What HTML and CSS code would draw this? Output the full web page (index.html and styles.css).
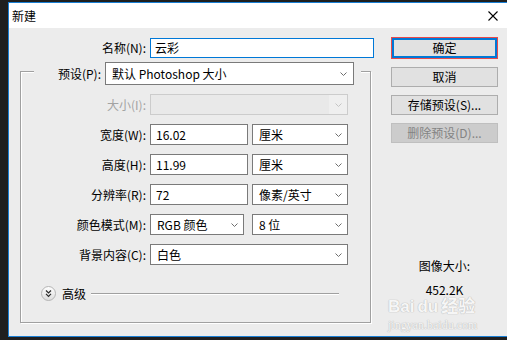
FILE: index.html
```html
<!DOCTYPE html>
<html lang="zh-CN">
<head>
    <meta charset="UTF-8">
    <meta name="viewport" content="width=device-width, initial-scale=1.0">
    <title>新建</title>
    <link rel="stylesheet" href="styles.css">
</head>
<body>
    <div class="window">
        <div class="titlebar">
            <span class="title">新建</span>
            <svg class="close" width="10" height="10" viewBox="0 0 10 10">
                <path d="M0.5 0.5 L9.5 9.5 M9.5 0.5 L0.5 9.5" stroke="#000" stroke-width="1.1" fill="none"/>
            </svg>
        </div>

        <div class="dialog">
            <div class="left">
                <div class="name-row">
                    <span class="label">名称(N):</span>
                    <div class="input focused name-input">云彩</div>
                </div>

                <div class="group">
                    <div class="group-head">
                        <span class="label">预设(P):</span>
                        <div class="select preset">
                            <span>默认 Photoshop 大小</span>
                            <svg class="arrow" width="7" height="4" viewBox="0 0 7 4"><polyline points="0.5,0.5 3.5,3.5 6.5,0.5" fill="none" stroke="#6e6e6e" stroke-width="1"/></svg>
                        </div>
                    </div>

                    <div class="rows">
                        <div class="row">
                            <span class="label disabled-text">大小(I):</span>
                            <div class="select disabled w-full">
                                <span></span>
                                <div class="drop"><svg class="arrow" width="7" height="4" viewBox="0 0 7 4"><polyline points="0.5,0.5 3.5,3.5 6.5,0.5" fill="none" stroke="#c4c4c4" stroke-width="1"/></svg></div>
                            </div>
                        </div>
                        <div class="row">
                            <span class="label">宽度(W):</span>
                            <div class="input w-num">16.02</div>
                            <div class="select w-unit">
                                <span>厘米</span>
                                <svg class="arrow" width="7" height="4" viewBox="0 0 7 4"><polyline points="0.5,0.5 3.5,3.5 6.5,0.5" fill="none" stroke="#6e6e6e" stroke-width="1"/></svg>
                            </div>
                        </div>
                        <div class="row">
                            <span class="label">高度(H):</span>
                            <div class="input w-num">11.99</div>
                            <div class="select w-unit">
                                <span>厘米</span>
                                <svg class="arrow" width="7" height="4" viewBox="0 0 7 4"><polyline points="0.5,0.5 3.5,3.5 6.5,0.5" fill="none" stroke="#6e6e6e" stroke-width="1"/></svg>
                            </div>
                        </div>
                        <div class="row">
                            <span class="label">分辨率(R):</span>
                            <div class="input w-num">72</div>
                            <div class="select w-unit">
                                <span>像素/英寸</span>
                                <svg class="arrow" width="7" height="4" viewBox="0 0 7 4"><polyline points="0.5,0.5 3.5,3.5 6.5,0.5" fill="none" stroke="#6e6e6e" stroke-width="1"/></svg>
                            </div>
                        </div>
                        <div class="row">
                            <span class="label">颜色模式(M):</span>
                            <div class="select w-mode">
                                <span>RGB 颜色</span>
                                <svg class="arrow" width="7" height="4" viewBox="0 0 7 4"><polyline points="0.5,0.5 3.5,3.5 6.5,0.5" fill="none" stroke="#6e6e6e" stroke-width="1"/></svg>
                            </div>
                            <div class="select w-unit bits">
                                <span>8 位</span>
                                <svg class="arrow" width="7" height="4" viewBox="0 0 7 4"><polyline points="0.5,0.5 3.5,3.5 6.5,0.5" fill="none" stroke="#6e6e6e" stroke-width="1"/></svg>
                            </div>
                        </div>
                        <div class="row">
                            <span class="label">背景内容(C):</span>
                            <div class="select w-full">
                                <span>白色</span>
                                <svg class="arrow" width="7" height="4" viewBox="0 0 7 4"><polyline points="0.5,0.5 3.5,3.5 6.5,0.5" fill="none" stroke="#6e6e6e" stroke-width="1"/></svg>
                            </div>
                        </div>
                    </div>

                    <div class="advanced">
                        <svg width="15" height="15" viewBox="0 0 15 15">
                            <defs>
                                <linearGradient id="knob" x1="0" y1="0" x2="0" y2="1">
                                    <stop offset="0" stop-color="#ffffff"/>
                                    <stop offset="1" stop-color="#dcdcdc"/>
                                </linearGradient>
                            </defs>
                            <circle cx="7.5" cy="7.5" r="7" fill="url(#knob)" stroke="#b4b4b4" stroke-width="1"/>
                            <polyline points="5,4.5 7.5,7 10,4.5" fill="none" stroke="#2a2a2a" stroke-width="1.2"/>
                            <polyline points="5,7.8 7.5,10.3 10,7.8" fill="none" stroke="#2a2a2a" stroke-width="1.2"/>
                        </svg>
                        <span class="adv-text">高级</span>
                        <div class="adv-line"></div>
                    </div>
                </div>
            </div>

            <div class="right">
                <div class="btn default">确定</div>
                <div class="btn">取消</div>
                <div class="btn">存储预设(S)...</div>
                <div class="btn disabled">删除预设(D)...</div>

                <div class="size-info">
                    <div>图像大小:</div>
                    <div class="size-value">452.2K</div>
                </div>
            </div>
        </div>

        <div class="watermark">
            <div class="wm-logo">Bai<span class="wm-du">du</span>经验</div>
            <div class="wm-url">jingyan.baidu.com</div>
        </div>
    </div>
</body>
</html>
```

FILE: styles.css
```css
* {
    box-sizing: border-box;
}
body {
    margin: 0;
    background: #1f1f1f;
    font-family: "Noto Sans CJK SC", "Noto Sans", sans-serif;
    font-size: 12px;
    line-height: 16px;
    color: #000;
    overflow: hidden;
}
.window {
    position: relative;
    margin: 2px 0 0 8px;
    height: 335px;
    border: 1px solid #1a7fd4;
    border-right: none;
    background: #ececec;
}
.titlebar {
    height: 25px;
    background: #fff;
    display: flex;
    align-items: center;
    justify-content: space-between;
    padding: 0 9px 0 3px;
}
.title {
    font-size: 12px;
}
.dialog {
    display: flex;
    height: 308px;
}
.left {
    width: 382px;
    padding: 10px 0 0 11px;
}
.label {
    text-align: right;
    margin-right: 4px;
    white-space: nowrap;
}
.name-row {
    display: flex;
    align-items: center;
    height: 20px;
}
.name-row .label {
    width: 126px;
}
.input {
    height: 21px;
    border: 1px solid #7a7a7a;
    background: #fff;
    padding: 0 5px;
    display: flex;
    align-items: center;
}
.input.focused {
    border-color: #0078d7;
}
.name-input {
    width: 224px;
    height: 20px;
    padding-left: 4px;
}
.select {
    height: 21px;
    border: 1px solid #7a7a7a;
    background: #fff;
    padding: 0 5px 0 6px;
    display: flex;
    align-items: center;
    justify-content: space-between;
}
.select .arrow {
    flex-shrink: 0;
}
.select.disabled {
    border-color: #cccccc;
    background: #e9e9e9;
    padding: 0;
}
.select.disabled .drop {
    width: 18px;
    height: 100%;
    background: #efefef;
    display: flex;
    align-items: center;
    justify-content: center;
}
.disabled-text {
    color: #a3a3a3;
}
.group {
    margin-top: 13px;
    width: 351px;
    height: 252px;
    border: 1px solid #a0a0a0;
    box-shadow: inset 1px 1px 0 #fff, 1px 1px 0 #fff;
}
.group-head {
    margin: -10px 0 0 13px;
    width: 327px;
    height: 23px;
    background: #ececec;
    display: flex;
    align-items: center;
}
.group-head .label {
    width: 67px;
}
.preset {
    width: 249px;
    height: 23px;
    padding-right: 6px;
}
.rows {
    display: flex;
    flex-direction: column;
    gap: 9px;
    margin-top: 9px;
}
.row {
    display: flex;
    align-items: center;
    height: 21px;
}
.row .label {
    width: 125px;
}
.w-full {
    width: 198px;
}
.w-num {
    width: 98px;
}
.w-unit {
    width: 96px;
    margin-left: 4px;
}
.w-mode {
    width: 94px;
}
.bits {
    margin-left: 8px;
}
.advanced {
    display: flex;
    align-items: center;
    height: 15px;
    margin-top: 21px;
    padding-left: 20px;
}
.adv-text {
    margin-left: 6px;
}
.adv-line {
    flex: 1;
    height: 2px;
    margin: 0 31px 0 5px;
    border-top: 1px solid #a0a0a0;
    border-bottom: 1px solid #fff;
}
.right {
    width: 107px;
    padding-top: 9px;
    display: flex;
    flex-direction: column;
}
.btn {
    height: 20px;
    border: 1px solid #adadad;
    background: #e1e1e1;
    display: flex;
    align-items: center;
    justify-content: center;
    margin-bottom: 8px;
    white-space: nowrap;
}
.btn.default {
    height: 22px;
    border-color: #e8494b;
    box-shadow: inset 0 0 0 2px #0078d7;
}
.btn.disabled {
    background: #cccccc;
    border-color: #bfbfbf;
    color: #838383;
}
.size-info {
    margin-top: 107px;
    text-align: center;
}
.size-value {
    margin-top: 8px;
}
.watermark {
    position: absolute;
    left: 379px;
    top: 295px;
    color: #f6f6f6;
    text-shadow: 0 0 1px #b8b8b8, 0 0 1px #b8b8b8;
    pointer-events: none;
}
.wm-logo {
    font-family: "Liberation Sans", "Noto Sans CJK SC", sans-serif;
    font-size: 17px;
    font-weight: bold;
    line-height: 18px;
}
.wm-du {
    margin: 0 3px;
}
.wm-url {
    font-family: "Liberation Serif", serif;
    font-size: 12px;
    line-height: 14px;
    margin-top: 2px;
}
```
